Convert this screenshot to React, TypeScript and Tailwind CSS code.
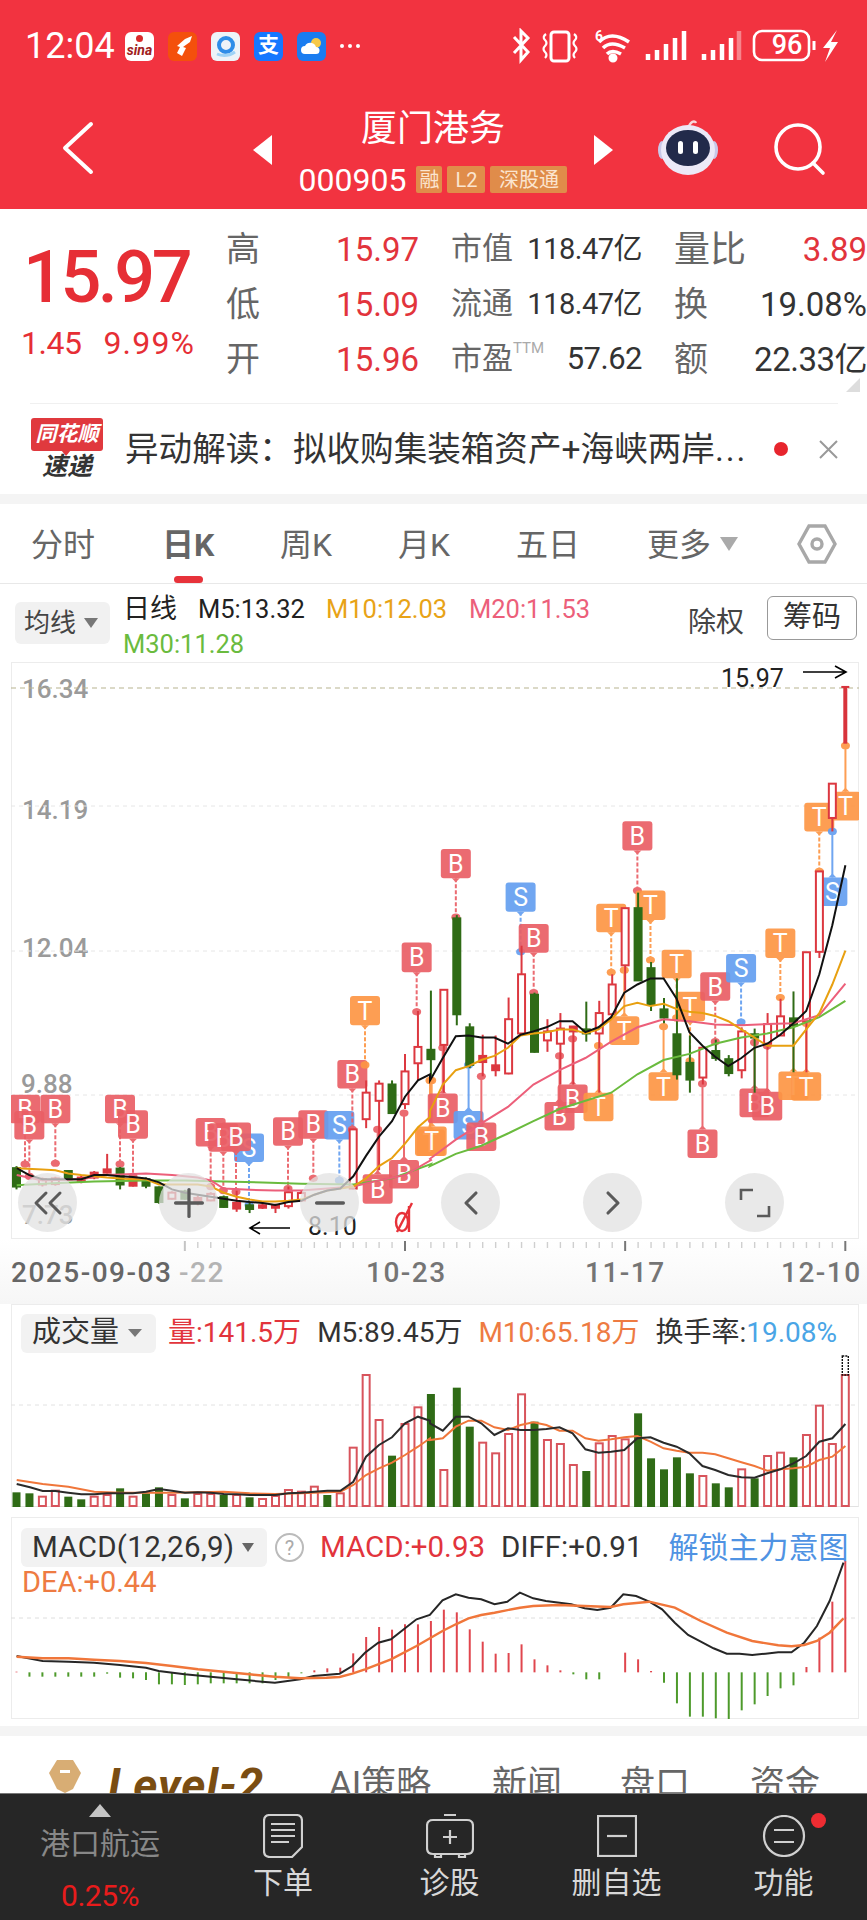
import { ChevronLeft, ChevronRight, ChevronsLeft, Minus, Plus } from "lucide-react";

const RED = "#e7323a";
const GREEN = "#2f6b16";

// x of the nth candle, shared by all three panels
const cx = (i: number) => 16.5 + 12.95 * i;

// readings were taken from crops of the chart, these map them back to page px
const L = (x: number) => x / 3;
const R = (x: number) => 430 + x / 2.98;
const Y = (y: number) => 660 + y / 2.45;

function toPoints(left: number[], right: number[], fy: (y: number) => number, fr = R) {
  const out: string[] = [];
  for (let i = 0; i < left.length; i += 2) out.push(`${L(left[i]).toFixed(1)},${fy(left[i + 1]).toFixed(1)}`);
  for (let i = 0; i < right.length; i += 2) out.push(`${fr(right[i]).toFixed(1)},${fy(right[i + 1]).toFixed(1)}`);
  return out.join(" ");
}

type Candle = [number, number, number, number, number, "r" | "g" | "f"];

const CANDLES: Candle[] = [
  [0, 1240, 1297, 1245, 1290, "g"],
  [2, 1268, 1290, 1272, 1285, "r"],
  [3, 1266, 1288, 1270, 1284, "r"],
  [4, 1250, 1274, 1252, 1272, "g"],
  [5, 1262, 1282, 1268, 1276, "f"],
  [6, 1252, 1272, 1256, 1268, "f"],
  [7, 1210, 1258, 1248, 1256, "f"],
  [8, 1242, 1297, 1246, 1285, "g"],
  [9, 1268, 1290, 1272, 1288, "f"],
  [10, 1268, 1294, 1272, 1288, "g"],
  [11, 1290, 1332, 1292, 1328, "g"],
  [12, 1302, 1322, 1305, 1320, "r"],
  [13, 1298, 1322, 1302, 1320, "g"],
  [14, 1312, 1336, 1318, 1326, "f"],
  [15, 1304, 1326, 1308, 1324, "r"],
  [16, 1312, 1342, 1316, 1340, "g"],
  [17, 1300, 1352, 1330, 1344, "f"],
  [18, 1330, 1355, 1336, 1345, "g"],
  [19, 1330, 1345, 1336, 1342, "f"],
  [20, 1332, 1355, 1336, 1342, "f"],
  [21, 1290, 1344, 1304, 1338, "r"],
  [22, 1300, 1328, 1306, 1324, "r"],
  [26, 1150, 1297, 1150, 1295, "r"],
  [27, 1030, 1147, 1060, 1125, "r"],
  [28, 1030, 1250, 1038, 1080, "r"],
  [29, 1030, 1112, 1040, 1110, "g"],
  [30, 965, 1100, 1008, 1088, "r"],
  [31, 860, 1030, 948, 988, "r"],
  [32, 810, 1020, 955, 978, "g"],
  [33, 808, 1060, 808, 943, "r"],
  [34, 625, 895, 633, 868, "g"],
  [35, 890, 1000, 900, 992, "g"],
  [36, 918, 1020, 970, 985, "f"],
  [37, 920, 1020, 993, 1005, "f"],
  [38, 827, 1015, 880, 1013, "r"],
  [39, 700, 920, 770, 915, "r"],
  [40, 815, 962, 820, 960, "g"],
  [41, 880, 960, 910, 932, "r"],
  [42, 865, 1040, 903, 940, "r"],
  [43, 897, 1040, 898, 910, "f"],
  [44, 837, 935, 905, 915, "g"],
  [45, 835, 1060, 865, 915, "r"],
  [46, 770, 870, 795, 868, "r"],
  [47, 608, 810, 608, 748, "r"],
  [48, 570, 785, 608, 785, "g"],
  [49, 740, 860, 755, 845, "g"],
  [50, 828, 890, 856, 876, "g"],
  [51, 780, 1028, 917, 1015, "g"],
  [52, 920, 1060, 987, 1028, "g"],
  [53, 950, 1040, 950, 1023, "r"],
  [54, 930, 982, 958, 975, "g"],
  [55, 968, 1020, 978, 1012, "g"],
  [56, 900, 1025, 910, 1005, "r"],
  [57, 903, 1060, 917, 925, "g"],
  [58, 865, 955, 892, 940, "r"],
  [59, 830, 920, 873, 920, "r"],
  [60, 812, 1010, 878, 895, "g"],
  [61, 716, 1010, 716, 885, "r"],
  [62, 518, 730, 518, 715, "r"],
  [63, 303, 420, 303, 387, "r"],
];

const FLAG_COLOR: Record<string, string> = { B: "#ea5f66", S: "#649ff0", T: "#fd9645" };

// label, x, top, bottom, y of the dot at the end of the stem
type Flag = [string, number, number, number, number];

const FLAGS_LEFT: Flag[] = [
  ["B", 75, 1065, 1135, 1235],
  ["B", 88, 1105, 1175, 1265],
  ["B", 166, 1065, 1135, 1233],
  ["B", 360, 1065, 1135, 1235],
  ["B", 399, 1103, 1173, 1265],
  ["S", 747, 1160, 1230, 1335],
  ["B", 632, 1122, 1192, 1290],
  ["B", 670, 1135, 1205, 1300],
  ["B", 708, 1133, 1203, 1303],
  ["B", 864, 1120, 1190, 1295],
  ["B", 940, 1103, 1173, 1270],
  ["S", 1018, 1105, 1175, 1275],
  ["B", 1057, 980, 1050, 1150],
  ["T", 1095, 823, 895, 992],
  ["B", 1250, 692, 765, 862],
  ["B", 1133, 1260, 1332, 1150],
  ["B", 1212, 1225, 1295, 1110],
  ["T", 1290, 1150, 1215, 1030],
];

const FLAGS_RIGHT: Flag[] = [
  ["T", 5, 1143, 1215, 1030],
  ["B", 38, 1062, 1135, 950],
  ["S", 115, 1105, 1175, 992],
  ["B", 153, 1133, 1203, 1020],
  ["B", 77, 463, 535, 630],
  ["S", 270, 545, 617, 715],
  ["B", 309, 647, 717, 815],
  ["B", 386, 1083, 1153, 970],
  ["B", 425, 1040, 1110, 928],
  ["T", 502, 1060, 1130, 945],
  ["T", 540, 597, 667, 765],
  ["T", 579, 873, 943, 760],
  ["B", 618, 395, 467, 565],
  ["T", 657, 565, 637, 735],
  ["T", 696, 1010, 1080, 898],
  ["T", 735, 710, 780, 877],
  ["T", 775, 813, 885, 982],
  ["B", 812, 1150, 1220, 1038],
  ["B", 850, 765, 835, 935],
  ["S", 927, 720, 790, 887],
  ["B", 967, 1050, 1120, 937],
  ["B", 1005, 1058, 1128, 945],
  ["T", 1044, 658, 730, 827],
  ["T", 1083, 1008, 1078, 890],
  ["T", 1121, 1010, 1080, 890],
  ["T", 1160, 350, 420, 518],
  ["S", 1199, 533, 603, 420],
  ["T", 1238, 323, 393, 210],
];

const MA5 = toPoints(
  [50, 1245, 88, 1262, 127, 1272, 205, 1272, 244, 1272, 283, 1262, 321, 1262, 360, 1265, 399, 1267, 438, 1270, 477, 1280, 516, 1297, 555, 1305, 593, 1310, 632, 1315, 671, 1320, 710, 1325, 749, 1328, 788, 1330, 826, 1335, 865, 1328, 904, 1325, 943, 1310, 982, 1300, 1021, 1295, 1060, 1265, 1098, 1215, 1137, 1168, 1176, 1130, 1215, 1070, 1254, 1030, 1290, 1015],
  [0, 1030, 38, 975, 77, 922, 115, 920, 153, 925, 192, 925, 232, 940, 270, 918, 308, 910, 347, 900, 386, 885, 425, 885, 463, 912, 502, 900, 540, 875, 579, 815, 618, 795, 657, 780, 696, 780, 735, 830, 773, 912, 812, 945, 850, 972, 889, 995, 928, 975, 967, 950, 1005, 940, 1044, 918, 1083, 890, 1121, 860, 1160, 770, 1199, 650, 1238, 503],
  Y,
);
const MA10 = toPoints(
  [50, 1245, 127, 1248, 166, 1250, 205, 1258, 244, 1262, 283, 1265, 321, 1268, 360, 1270, 399, 1272, 438, 1272, 477, 1285, 593, 1285, 632, 1290, 671, 1305, 710, 1315, 749, 1322, 788, 1327, 826, 1327, 865, 1325, 904, 1322, 943, 1310, 982, 1300, 1021, 1295, 1060, 1290, 1098, 1270, 1137, 1240, 1176, 1220, 1215, 1185, 1254, 1145, 1290, 1120],
  [0, 1105, 38, 1040, 77, 1005, 115, 995, 153, 980, 192, 970, 232, 950, 270, 920, 308, 915, 347, 912, 386, 905, 425, 905, 463, 915, 502, 905, 540, 880, 579, 848, 618, 840, 657, 848, 696, 842, 735, 855, 773, 862, 812, 865, 850, 872, 889, 885, 928, 905, 967, 925, 1005, 945, 1044, 945, 1083, 945, 1121, 905, 1160, 865, 1199, 795, 1238, 712],
  Y,
);
const MA20 = toPoints(
  [50, 1262, 127, 1275, 244, 1272, 321, 1262, 438, 1258, 516, 1262, 593, 1268, 632, 1275, 671, 1295, 749, 1298, 826, 1300, 904, 1300, 982, 1295, 1060, 1290, 1137, 1275, 1215, 1262, 1293, 1225],
  [0, 1222, 77, 1175, 153, 1135, 232, 1095, 308, 1040, 386, 1005, 463, 975, 540, 935, 618, 900, 696, 880, 773, 885, 850, 893, 928, 895, 1005, 892, 1083, 890, 1160, 870, 1238, 793],
  Y,
);
const MA30 = toPoints(
  [50, 1287, 160, 1282, 282, 1278, 438, 1275, 555, 1275, 671, 1278, 788, 1280, 904, 1283, 1060, 1285, 1176, 1270, 1293, 1235],
  [0, 1240, 77, 1210, 153, 1190, 232, 1160, 308, 1130, 386, 1100, 463, 1080, 540, 1060, 618, 1015, 696, 980, 773, 965, 850, 940, 928, 925, 1005, 915, 1083, 900, 1160, 875, 1238, 835],
  Y,
);

const VOLUMES: [number, "r" | "g"][] = [
  [577, "g"], [580, "g"], [590, "r"], [572, "r"], [590, "g"], [598, "g"], [590, "r"], [585, "r"], [565, "g"], [590, "r"],
  [580, "g"], [562, "g"], [585, "r"], [595, "g"], [582, "r"], [582, "r"], [585, "g"], [585, "r"], [592, "g"], [597, "r"],
  [588, "r"], [570, "r"], [575, "r"], [560, "r"], [585, "g"], [580, "r"], [443, "r"], [225, "r"], [360, "r"], [467, "g"],
  [372, "r"], [322, "r"], [282, "g"], [510, "r"], [263, "g"], [380, "g"], [428, "r"], [460, "r"], [402, "r"], [283, "r"],
  [365, "g"], [420, "r"], [432, "r"], [495, "r"], [513, "g"], [430, "r"], [408, "r"], [418, "r"], [340, "g"], [475, "g"],
  [508, "g"], [472, "g"], [520, "g"], [528, "r"], [550, "g"], [562, "g"], [508, "r"], [535, "g"], [468, "r"], [458, "r"],
  [472, "g"], [405, "r"], [317, "r"], [432, "r"], [225, "r"],
];

const VY = (y: number) => 1300 + y / 3;
const VOL_BLACK = toPoints(
  [50, 552, 90, 562, 128, 573, 166, 573, 205, 578, 244, 583, 283, 583, 321, 580, 399, 580, 438, 575, 477, 567, 516, 572, 555, 578, 593, 577, 632, 578, 671, 582, 710, 583, 749, 585, 826, 585, 865, 580, 904, 578, 943, 575, 982, 572, 1021, 572, 1060, 545, 1098, 470, 1137, 435, 1176, 412, 1215, 370, 1254, 350, 1290, 362],
  [0, 370, 38, 392, 77, 350, 115, 350, 153, 370, 192, 405, 232, 385, 270, 390, 308, 390, 347, 387, 386, 382, 425, 400, 463, 448, 502, 458, 540, 455, 579, 450, 618, 415, 657, 412, 696, 428, 735, 440, 773, 460, 812, 498, 850, 510, 889, 525, 928, 532, 967, 533, 1005, 520, 1044, 508, 1083, 490, 1121, 468, 1160, 425, 1199, 415, 1238, 372],
  VY,
);
const VOL_ORANGE = toPoints(
  [50, 540, 128, 552, 205, 560, 283, 575, 360, 578, 516, 578, 593, 577, 671, 575, 749, 580, 826, 582, 904, 580, 982, 577, 1021, 575, 1060, 555, 1098, 525, 1137, 505, 1176, 488, 1215, 465, 1254, 440, 1290, 415],
  [0, 420, 38, 415, 77, 380, 115, 362, 153, 362, 192, 382, 232, 390, 270, 375, 308, 367, 347, 375, 386, 392, 425, 392, 463, 415, 502, 422, 540, 418, 579, 412, 618, 408, 657, 425, 696, 445, 735, 452, 773, 458, 812, 458, 850, 463, 889, 475, 928, 487, 967, 498, 1005, 512, 1044, 508, 1083, 505, 1121, 500, 1160, 480, 1199, 470, 1238, 438],
  VY,
);

// macd crop had its own scale
const MX = (x: number) => x / 1.808;
const MY = (y: number) => 1510 + y / 3;
const MACD_ZERO = 484;
const MACD_BARS = [
  482, 497, 497, 497, 497, 497, 497, 488, 500, 502, 507, 520, 520, 522, 520, 517, 517, 517, 517, 517, 507, 500, 487, 478, 472,
  470, 427, 378, 348, 356, 340, 340, 330, 296, 304, 355, 392, 428, 426, 400, 445, 463, 478, 490, 505, 505, 484, 425, 445, 480,
  515, 577, 617, 617, 622, 625, 598, 580, 555, 532, 523, 468, 380, 272, 150,
];
const macdLine = (p: number[]) => {
  const out: string[] = [];
  for (let i = 0; i < p.length; i += 2) out.push(`${MX(p[i]).toFixed(1)},${MY(p[i + 1]).toFixed(1)}`);
  return out.join(" ");
};
const DIFF_LINE = macdLine([30, 435, 77, 450, 124, 452, 170, 455, 217, 462, 264, 470, 287, 480, 334, 490, 381, 497, 428, 505, 474, 512, 497, 515, 543, 505, 567, 495, 614, 488, 637, 465, 660, 425, 684, 395, 707, 385, 730, 355, 753, 325, 777, 312, 800, 268, 824, 250, 847, 260, 870, 265, 894, 280, 917, 272, 940, 245, 964, 262, 987, 270, 1033, 280, 1057, 292, 1080, 297, 1104, 290, 1127, 250, 1150, 255, 1174, 272, 1197, 295, 1220, 335, 1244, 372, 1267, 392, 1290, 412, 1314, 428, 1337, 428, 1360, 432, 1384, 428, 1407, 424, 1431, 424, 1454, 395, 1477, 345, 1500, 270, 1525, 155]);
const DEA_LINE = macdLine([30, 437, 77, 442, 124, 442, 170, 446, 217, 450, 264, 456, 311, 465, 358, 475, 404, 482, 451, 490, 497, 497, 543, 502, 590, 500, 614, 498, 637, 488, 660, 475, 707, 445, 753, 405, 800, 360, 824, 340, 847, 322, 870, 312, 894, 305, 940, 290, 964, 285, 1010, 282, 1057, 285, 1104, 288, 1127, 280, 1174, 272, 1220, 290, 1267, 330, 1314, 365, 1360, 390, 1407, 403, 1431, 406, 1454, 402, 1477, 390, 1500, 365, 1525, 322]);

function FlagMark({ flag, fx }: { flag: Flag; fx: (x: number) => number }) {
  const [label, zx, zTop, zBottom, zDot] = flag;
  const x = fx(zx);
  const top = Y(zTop);
  const bottom = Y(zBottom);
  const dot = Y(zDot);
  const above = dot > bottom;
  const color = FLAG_COLOR[label];
  return (
    <g opacity={0.92}>
      <line
        x1={x}
        x2={x}
        y1={above ? bottom : top}
        y2={dot}
        stroke={color}
        strokeWidth={2}
        strokeDasharray={above ? "4 2" : undefined}
      />
      <ellipse cx={x} cy={dot} rx={4.5} ry={3.6} fill={color} />
      <rect x={x - 15} y={top} width={30} height={bottom - top} rx={3} fill={color} />
      <polygon
        points={above ? `${x - 4},${bottom} ${x + 4},${bottom} ${x},${bottom + 4}` : `${x - 4},${top} ${x + 4},${top} ${x},${top - 4}`}
        fill={color}
      />
      <text x={x} y={(top + bottom) / 2 + 9} textAnchor="middle" fontSize={25} fill="#fff" fontFamily="Roboto, sans-serif">
        {label}
      </text>
    </g>
  );
}

function CandleMark({ c }: { c: Candle }) {
  const [i, hi, lo, top, bot, kind] = c;
  const x = cx(i);
  const color = kind === "g" ? GREEN : "#dc3840";
  return (
    <g>
      <line x1={x} x2={x} y1={Y(hi)} y2={Y(lo)} stroke={color} strokeWidth={2} />
      <rect
        x={x - 3.5}
        y={Y(top)}
        width={7}
        height={Y(bot) - Y(top)}
        fill={kind === "r" ? "#fff" : color}
        stroke={color}
        strokeWidth={2}
      />
    </g>
  );
}

function OverlayButton({ x, children }: { x: number; children: React.ReactNode }) {
  // sits over the candles, x comes from the data so it goes through style
  return (
    <div
      className="absolute top-[510px] flex h-[59px] w-[59px] items-center justify-center rounded-full bg-[#e2e2e2]/75 text-[#5a5a5a]"
      style={{ left: x - 30 }}
    >
      {children}
    </div>
  );
}

function AxisLabel({ className, children }: { className: string; children: string }) {
  return <span className={`absolute text-[26px] leading-[30px] font-medium text-[#9a9a9a] ${className}`}>{children}</span>;
}

function KLineChart() {
  return (
    <div className="relative ml-[11px] h-[577px] w-[848px] border border-[#ececec]">
      <AxisLabel className="left-[10px] top-[11px]">16.34</AxisLabel>
      <AxisLabel className="left-[10px] top-[132px]">14.19</AxisLabel>
      <AxisLabel className="left-[10px] top-[270px]">12.04</AxisLabel>
      <AxisLabel className="left-[9px] top-[406px]">9.88</AxisLabel>
      <AxisLabel className="left-[10px] top-[537px]">7.73</AxisLabel>
      <svg className="absolute -left-px -top-px" width={848} height={577} viewBox="11 662 848 577">
        <line x1={11} x2={859} y1={688} y2={688} stroke="#b8b48f" strokeWidth={1.2} strokeDasharray="5 4" />
        {[806, 951, 1095].map((y) => (
          <line key={y} x1={11} x2={859} y1={y} y2={y} stroke="#e6e6e6" strokeWidth={1} strokeDasharray="4 4" />
        ))}
        {FLAGS_LEFT.map((f, i) => (
          <FlagMark key={`l${i}`} flag={f} fx={L} />
        ))}
        {FLAGS_RIGHT.map((f, i) => (
          <FlagMark key={`r${i}`} flag={f} fx={R} />
        ))}
        {CANDLES.map((c) => (
          <CandleMark key={c[0]} c={c} />
        ))}
        <line x1={cx(64)} x2={cx(64)} y1={Y(65)} y2={Y(205)} stroke="#d8333c" strokeWidth={4} />
        <line x1={cx(64) - 4} x2={cx(64) + 4} y1={Y(66)} y2={Y(66)} stroke="#d8333c" strokeWidth={2} />
        <polyline points={MA30} fill="none" stroke="#6abb3e" strokeWidth={2} />
        <polyline points={MA20} fill="none" stroke="#ec5f7a" strokeWidth={2} />
        <polyline points={MA10} fill="none" stroke="#e8a010" strokeWidth={2} />
        <polyline points={MA5} fill="none" stroke="#111" strokeWidth={2} />
        {/* arrows next to the high and low prices */}
        <path d="M803 672H846M835 666L846 672L835 678" fill="none" stroke="#000" strokeWidth={1.6} />
        <path d="M290 1228H250M260 1222L250 1228L260 1234" fill="none" stroke="#000" strokeWidth={1.6} />
        {/* slashed marker */}
        <g fill="none" stroke={RED} strokeWidth={2.4}>
          <ellipse cx={402} cy={1222} rx={6} ry={9} />
          <path d="M409 1206V1232M397 1232L412 1203" />
        </g>
      </svg>
      <span className="absolute left-[709px] top-[2px] text-[25px] leading-[28px] text-[#222]">15.97</span>
      <span className="absolute left-[296px] top-[550px] text-[25px] leading-[28px] text-[#222]">8.10</span>
      <OverlayButton x={36}>
        <ChevronsLeft size={48} strokeWidth={1.5} />
      </OverlayButton>
      <OverlayButton x={177}>
        <Plus size={46} strokeWidth={1.7} />
      </OverlayButton>
      <OverlayButton x={318}>
        <Minus size={46} strokeWidth={1.7} />
      </OverlayButton>
      <OverlayButton x={459}>
        <ChevronLeft size={40} strokeWidth={1.9} />
      </OverlayButton>
      <OverlayButton x={601}>
        <ChevronRight size={40} strokeWidth={1.9} />
      </OverlayButton>
      <OverlayButton x={743}>
        <svg width="34" height="32" viewBox="0 0 34 32" fill="none" stroke="currentColor" strokeWidth="2.6">
          <path d="M3 13V3H15M31 19V29H19" />
        </svg>
      </OverlayButton>
    </div>
  );
}

function TimeAxis() {
  return (
    <div className="h-[65px] bg-gradient-to-b from-white to-[#f6f6f6]">
      <svg className="block" width={867} height={12}>
        {Array.from({ length: 52 }, (_, n) => n + 13).map((i) => {
          const major = i === 13 || i === 30 || i === 47 || i === 64;
          return (
            <line
              key={i}
              x1={cx(i)}
              x2={cx(i)}
              y1={major ? 2 : 3}
              y2={major ? 12 : 9}
              stroke={major ? (i === 13 ? "#c4c4c4" : "#777") : "#cfcfcf"}
              strokeWidth={major ? 2 : 1.4}
            />
          );
        })}
      </svg>
      <div className="mt-[7px] flex text-[28px] leading-[30px] font-medium tracking-[1.5px] whitespace-nowrap text-[#757575]">
        <span className="ml-[11px] w-[168px] text-[#666]">2025-09-03</span>
        <span className="w-[187px] text-[#b4b4b4]">-22</span>
        <span className="w-[219px]">10-23</span>
        <span className="w-[196px]">11-17</span>
        <span>12-10</span>
      </div>
    </div>
  );
}

function VolumePanel() {
  return (
    <div className="relative ml-[11px] h-[203px] w-[848px] border border-[#ececec] border-b-[#e2e2e2]">
      <svg className="absolute -left-px -top-px" width={848} height={203} viewBox="11 1304 848 203">
        <line x1={11} x2={859} y1={1405} y2={1405} stroke="#e2e2e2" strokeDasharray="4 4" />
        {VOLUMES.map(([top, kind], i) =>
          kind === "g" ? (
            <rect key={i} x={cx(i) - 4} y={VY(top)} width={8} height={1507 - VY(top)} fill={GREEN} />
          ) : (
            <rect key={i} x={cx(i) - 3.5} y={VY(top)} width={7} height={1506 - VY(top)} fill="#fff" stroke="#d8545c" strokeWidth={2} />
          ),
        )}
        <rect x={cx(64) - 3} y={VY(168)} width={6} height={VY(225) - VY(168)} fill="none" stroke="#111" strokeWidth={1.4} strokeDasharray="2 1" />
        <polyline points={VOL_ORANGE} fill="none" stroke="#f0763a" strokeWidth={2} />
        <polyline points={VOL_BLACK} fill="none" stroke="#2a2a2a" strokeWidth={2} />
      </svg>
      <div className="relative flex h-[56px] items-center whitespace-nowrap text-[28px]">
        <div className="ml-[9px] flex h-[39px] w-[135px] items-center rounded-md bg-[#f2f2f2] pl-[11px] text-[29px] text-[#333]">
          成交量
          <span className="ml-[9px] h-0 w-0 border-x-[7px] border-t-[8px] border-x-transparent border-t-[#777]" />
        </div>
        <span className="ml-[12px] text-[#e2343c]">量:141.5万</span>
        <span className="ml-[16px] text-[#333]">M5:89.45万</span>
        <span className="ml-[16px] text-[#ee7b42]">M10:65.18万</span>
        <span className="ml-[16px] text-[#333]">换手率:</span>
        <span className="text-[#4aa5e6]">19.08%</span>
      </div>
    </div>
  );
}

function MacdPanel() {
  return (
    <div className="relative ml-[11px] mt-[10px] h-[202px] w-[848px] border border-[#ececec]">
      <svg className="absolute -left-px -top-px" width={848} height={202} viewBox="11 1516 848 202">
        <line x1={11} x2={859} y1={1617} y2={1617} stroke="#dedede" strokeDasharray="4 4" />
        {MACD_BARS.map((tip, i) => (
          <line
            key={i}
            x1={cx(i)}
            x2={cx(i)}
            y1={MY(MACD_ZERO)}
            y2={MY(tip)}
            stroke={tip < MACD_ZERO ? "#e0464e" : "#4d9a2b"}
            strokeWidth={2}
          />
        ))}
        <polyline points={DIFF_LINE} fill="none" stroke="#262626" strokeWidth={2} />
        <polyline points={DEA_LINE} fill="none" stroke="#f0763a" strokeWidth={2.4} />
      </svg>
      <div className="relative flex h-[59px] items-center whitespace-nowrap text-[29.5px]">
        <div className="ml-[9px] flex h-[39px] w-[246px] items-center rounded-md bg-[#f2f2f2] pl-[11px] text-[29.5px] tracking-[0.3px] text-[#333]">
          MACD(12,26,9)
          <span className="ml-[8px] h-0 w-0 border-x-[6px] border-t-[9px] border-x-transparent border-t-[#666]" />
        </div>
        <span className="ml-[8px] flex h-[29px] w-[29px] items-center justify-center rounded-full border-2 border-[#bbb] text-[20px] text-[#aaa]">?</span>
        <span className="ml-[16px] text-[#e2343c]">MACD:+0.93</span>
        <span className="ml-[16px] text-[#333]">DIFF:+0.91</span>
        <span className="ml-[26px] text-[30px] text-[#4f93e3]">解锁主力意图</span>
      </div>
      <div className="relative -mt-[10px] ml-[10px] text-[29px] leading-[30px] text-[#ee7b42]">DEA:+0.44</div>
    </div>
  );
}

function StatusBar() {
  const tile = "flex h-[29px] w-[29px] items-center justify-center rounded-[6px]";
  return (
    <div className="flex h-[92px] items-center pl-[25px] text-white">
      <span className="w-[100px] text-[36px] leading-none">12:04</span>
      <div className={`${tile} relative bg-white pt-[7px] text-[14px] leading-none font-bold text-[#a02020] italic`}>
        sina
        <span className="absolute left-[11px] top-[3px] h-[7px] w-[7px] rounded-full bg-[#d82a2a]" />
      </div>
      <div className={`${tile} ml-[14px] bg-[#f4500c]`}>
        <svg width="20" height="22" viewBox="0 0 20 22" fill="#fff">
          <path d="M19 1L12 4L4 11L7 12L4 18L9 21L13 13L10 12L17 7Z" />
        </svg>
      </div>
      <div className={`${tile} ml-[14px] bg-[#eef3f8]`}>
        <svg width="24" height="24" viewBox="0 0 24 24" fill="none">
          <circle cx="12" cy="11" r="7" stroke="#2f8de8" strokeWidth="4" />
          <path d="M3 20Q12 24 21 18" stroke="#9fd3f6" strokeWidth="3" />
        </svg>
      </div>
      <div className={`${tile} ml-[14px] bg-[#1677ff] text-[21px] font-bold`}>支</div>
      <div className={`${tile} ml-[14px] bg-[#1a7cf0]`}>
        <svg width="24" height="24" viewBox="0 0 24 24">
          <circle cx="16" cy="9" r="5" fill="#f7c948" />
          <path d="M5 20a4 4 0 0 1 0-8 6 6 0 0 1 11 1 3.5 3.5 0 0 1 0 7Z" fill="#fff" />
        </svg>
      </div>
      <div className="ml-[14px] flex gap-[4px]">
        <span className="h-[4px] w-[4px] rounded-full bg-white" />
        <span className="h-[4px] w-[4px] rounded-full bg-white" />
        <span className="h-[4px] w-[4px] rounded-full bg-white" />
      </div>
      <svg className="ml-[152px]" width="326" height="36" viewBox="517 28 326 36" fill="none" stroke="#fff" strokeWidth="3">
        {/* bluetooth */}
        <path d="M519 37L533 52L526 60V31L533 38L519 53" />
        {/* vibrate */}
        <rect x="556" y="32" width="18" height="29" rx="3" />
        <path d="M551 34Q547 37 550 40Q553 43 550 46Q547 49 550 52Q553 55 550 58M579 34Q583 37 580 40Q577 43 580 46Q583 49 580 52Q577 55 580 58" strokeWidth="2.2" />
        {/* wifi */}
        <path d="M604 42Q616 30 634 42M608 48Q616 40 630 48M612 54Q617 49 626 54" strokeWidth="3.6" />
        <circle cx="618" cy="58" r="3" fill="#fff" />
        {/* signal */}
        <path d="M653 60V54M662 60V50M671 60V44M680 60V38M689 60V31" strokeWidth="4.5" />
        <path d="M709 60V54M718 60V50M727 60V44M736 60V38" strokeWidth="4.5" />
        <path d="M744 60V31" strokeWidth="4.5" stroke="#ffffff66" />
        {/* battery */}
        <rect x="759" y="31" width="55" height="29" rx="8" strokeWidth="2.6" />
        <path d="M819 41V50" />
        {/* charging */}
        <path d="M842 30L828 48H835L830 62L843 42H836Z" fill="#fff" stroke="none" />
      </svg>
      <span className="absolute left-[595px] top-[28px] text-[14px] leading-[16px] font-bold">6</span>
      <span className="absolute left-[771px] top-[29px] w-[32px] text-center text-[27px] leading-[33px] font-medium">96</span>
    </div>
  );
}

function Header() {
  return (
    <header className="h-[209px] bg-[#f23340] text-white">
      <StatusBar />
      <div className="flex h-[117px]">
        <svg className="ml-[62px] mt-[29px]" width="32" height="54" viewBox="0 0 32 54" fill="none" stroke="#fff" strokeWidth="4" strokeLinecap="round" strokeLinejoin="round">
          <path d="M29 3L3 27L29 51" />
        </svg>
        <span className="ml-[159px] mt-[43px] h-0 w-0 border-y-[15px] border-r-[19px] border-y-transparent border-r-white" />
        <div className="flex w-[322px] flex-col items-center">
          <div className="mt-[17px] text-[36px] leading-[40px]">厦门港务</div>
          <div className="mt-[17px] flex h-[27px] items-center">
            <span className="text-[32px] leading-none text-white">000905</span>
            <span className="ml-[10px] flex h-[27px] w-[26px] items-center justify-center rounded-[2px] bg-[#e08c4a] text-[20px] text-[#fbe5d0]">融</span>
            <span className="ml-[5px] flex h-[27px] w-[38px] items-center justify-center rounded-[2px] bg-[#e08c4a] text-[20px] text-[#fbe5d0]">L2</span>
            <span className="ml-[5px] flex h-[27px] w-[77px] items-center justify-center rounded-[2px] bg-[#e08c4a] text-[20px] text-[#fbe5d0]">深股通</span>
          </div>
        </div>
        <span className="mt-[43px] h-0 w-0 border-y-[15px] border-l-[19px] border-y-transparent border-l-white" />
        <svg className="ml-[44px] mt-[27px]" width="62" height="56" viewBox="0 0 62 56">
          <path d="M31 10C33 2 38 1 39 4" fill="none" stroke="#f8d7da" strokeWidth="2.4" />
          <ellipse cx="5" cy="31" rx="4" ry="9" fill="#c9c8e8" />
          <ellipse cx="57" cy="31" rx="4" ry="9" fill="#c9c8e8" />
          <ellipse cx="31" cy="31" rx="27" ry="25" fill="#ece9f7" />
          <ellipse cx="31" cy="29" rx="22" ry="18" fill="#222a4a" />
          <rect x="21" y="22" width="5" height="13" rx="2.5" fill="#fff" />
          <rect x="36" y="22" width="5" height="13" rx="2.5" fill="#fff" />
        </svg>
        <svg className="ml-[54px] mt-[31px]" width="54" height="54" viewBox="0 0 54 54" fill="none" stroke="#fff" strokeWidth="3.6" strokeLinecap="round">
          <circle cx="25" cy="24" r="22" />
          <path d="M40 40L50 50" />
        </svg>
      </div>
    </header>
  );
}

function QuoteCell({ label, value, labelClass, valueClass }: { label: React.ReactNode; value: string; labelClass: string; valueClass: string }) {
  return (
    <div className="flex h-[55px] items-center justify-between whitespace-nowrap">
      <span className={labelClass}>{label}</span>
      <span className={valueClass}>{value}</span>
    </div>
  );
}

function Quote() {
  const first = "text-[34px] text-[#666]";
  const second = "text-[31px] text-[#666]";
  const third = "text-[36px] text-[#666]";
  const red = "text-[33px] text-[#e2343c]";
  const dark = "text-[29px] tracking-[-0.5px] text-[#333]";
  return (
    <section className="relative h-[195px]">
      <div className="flex">
        <div className="w-[226px] pl-[21px]">
          <div className="pl-[2px] pt-[36px] text-[72px] leading-[66px] font-medium tracking-[-3.5px] text-[#e62e35]">15.97</div>
          <div className="mt-[14px] flex gap-[22px] text-[32px] leading-[36px] text-[#e62e35]">
            <span className="tracking-[-0.5px]">1.45</span>
            <span className="tracking-[1.2px]">9.99%</span>
          </div>
        </div>
        <div className="grid grid-cols-[193px_191px_193px] gap-x-[32px] pt-[13px]">
          <QuoteCell label="高" value="15.97" labelClass={first} valueClass={red} />
          <QuoteCell label="市值" value="118.47亿" labelClass={second} valueClass={dark} />
          <QuoteCell label="量比" value="3.89" labelClass={third} valueClass={red} />
          <QuoteCell label="低" value="15.09" labelClass={first} valueClass={red} />
          <QuoteCell label="流通" value="118.47亿" labelClass={second} valueClass={dark} />
          <QuoteCell label="换" value="19.08%" labelClass={first} valueClass="text-[33px] text-[#333]" />
          <QuoteCell label="开" value="15.96" labelClass={first} valueClass={red} />
          <QuoteCell
            label={
              <span className="flex items-start">
                市盈<span className="mt-[5px] text-[15px] leading-none text-[#aaa]">TTM</span>
              </span>
            }
            value="57.62"
            labelClass={second}
            valueClass="text-[31px] tracking-[-0.5px] text-[#333]"
          />
          <QuoteCell label="额" value="22.33亿" labelClass={first} valueClass="text-[33px] tracking-[-0.5px] text-[#333]" />
        </div>
      </div>
      <span className="absolute right-[7px] top-[169px] h-0 w-0 border-b-[14px] border-l-[14px] border-b-[#ddd] border-l-transparent" />
      <div className="absolute bottom-0 left-[30px] right-[29px] h-px bg-[#f0f0f0]" />
    </section>
  );
}

function NewsStrip() {
  return (
    <div className="flex h-[90px] items-center">
      <div className="ml-[31px] flex w-[72px] flex-col items-center">
        <div className="relative flex h-[33px] w-[72px] items-center justify-center rounded-[3px] bg-[#e0393e] text-[21px] font-bold text-white italic">
          同花顺
          <span className="absolute -bottom-[5px] left-[30px] h-0 w-0 border-x-[5px] border-t-[6px] border-x-transparent border-t-[#e0393e]" />
        </div>
        <div className="mt-[3px] text-[25px] leading-[26px] font-bold text-[#333] italic">速递</div>
      </div>
      <span className="ml-[22px] w-[636px] overflow-hidden pt-[2px] text-[33.6px] leading-[40px] whitespace-nowrap text-[#333]">
        异动解读：拟收购集装箱资产+海峡两岸<span className="tracking-[2px]">...</span>
      </span>
      <span className="ml-[13px] h-[14px] w-[14px] rounded-full bg-[#e7252d]" />
      <svg className="ml-[30px]" width="21" height="21" viewBox="0 0 21 21" stroke="#999" strokeWidth="2">
        <path d="M2 2L19 19M19 2L2 19" />
      </svg>
    </div>
  );
}

function PeriodTabs() {
  const base = "absolute top-[19px] text-[32px] leading-[44px] text-[#666]";
  return (
    <div className="relative h-[80px] border-b border-[#e8e8e8]">
      <span className={`${base} left-[31px]`}>分时</span>
      <span className={`${base} left-[162px] font-bold text-[#333]`}>日K</span>
      <span className={`${base} left-[280px]`}>周K</span>
      <span className={`${base} left-[398px]`}>月K</span>
      <span className={`${base} left-[516px]`}>五日</span>
      <span className={`${base} left-[647px]`}>更多</span>
      <span className="absolute left-[720px] top-[33px] h-0 w-0 border-x-[9px] border-t-[14px] border-x-transparent border-t-[#aaa]" />
      <svg className="absolute left-[797px] top-[20px]" width="40" height="40" viewBox="0 0 40 40" fill="none" stroke="#a8a8a8" strokeWidth="3.4">
        <path d="M12 2H28L38 20L28 38H12L2 20Z" />
        <circle cx="20" cy="20" r="5" />
      </svg>
      <span className="absolute left-[174px] top-[72px] h-[7px] w-[29px] rounded-full bg-[#e7323a]" />
    </div>
  );
}

function MaLegend() {
  return (
    <div className="relative h-[78px]">
      <div className="absolute left-[15px] top-[18px] flex h-[42px] w-[95px] items-center rounded-md bg-[#f1f1f1] pl-[9px] text-[26px] text-[#444]">
        均线
        <span className="ml-[8px] h-0 w-0 border-x-[7px] border-t-[10px] border-x-transparent border-t-[#777]" />
      </div>
      <div className="ml-[123px] flex h-[51px] items-center whitespace-nowrap text-[25.5px]">
        <span className="w-[75px] text-[27px] text-[#222]">日线</span>
        <span className="w-[128px] text-[#222]">M5:13.32</span>
        <span className="w-[143px] text-[#e8a317]">M10:12.03</span>
        <span className="text-[#ec5f7a]">M20:11.53</span>
      </div>
      <div className="ml-[123px] -mt-[6px] text-[25.5px] leading-[30px] text-[#6abb3e]">M30:11.28</div>
      <span className="absolute left-[688px] top-[20px] text-[28px] leading-[38px] text-[#444]">除权</span>
      <div className="absolute left-[767px] top-[12px] flex h-[44px] w-[90px] items-center justify-center rounded-md border border-[#999] text-[29px] text-[#333]">
        筹码
      </div>
    </div>
  );
}

function Level2Tabs() {
  const tab = "absolute top-[27px] text-[35px] leading-[44px] text-[#666]";
  return (
    <div className="relative h-[58px]">
      <svg className="absolute left-[48px] top-[23px]" width="34" height="34" viewBox="0 0 34 34">
        <path d="M9 1H25L33 14L25 30L17 34L9 30L1 14Z" fill="#d8ad74" />
        <rect x="12" y="11" width="10" height="3" fill="#fff" />
      </svg>
      <span className="absolute left-[108px] top-[24px] text-[46px] leading-[50px] font-bold tracking-[1px] text-[#7a4d12] italic">Level-2</span>
      <span className={`${tab} left-[329px]`}>AI策略</span>
      <span className={`${tab} left-[492px]`}>新闻</span>
      <span className={`${tab} left-[620px]`}>盘口</span>
      <span className={`${tab} left-[750px]`}>资金</span>
    </div>
  );
}

function BottomItem({ label, icon, className }: { label: string; icon: React.ReactNode; className: string }) {
  return (
    <div className={`flex flex-col items-center ${className}`}>
      <div className="flex h-[46px] items-center">{icon}</div>
      <div className="mt-[6px] text-[30px] leading-[36px] text-[#d8d8d8]">{label}</div>
    </div>
  );
}

function BottomBar() {
  return (
    <nav className="absolute bottom-0 left-0 flex h-[127px] w-full items-start border-t border-[#777] bg-[#262626]">
      <div className="flex w-[200px] flex-col items-center">
        <span className="mt-[10px] h-0 w-0 border-x-[11px] border-b-[13px] border-x-transparent border-b-[#c4c4c4]" />
        <div className="mt-[8px] text-[30px] leading-[38px] text-[#888]">港口航运</div>
        <div className="mt-[16px] text-[30px] leading-[34px] tracking-[-0.5px] text-[#e81c1c]">0.25%</div>
      </div>
      <BottomItem
        className="mt-[19px] w-[166px]"
        label="下单"
        icon={
          <svg width="40" height="44" viewBox="0 0 40 44" fill="none" stroke="#d0d0d0" strokeWidth="2.2">
            <path d="M7 1H33Q39 1 39 7V33L29 43H7Q1 43 1 37V7Q1 1 7 1Z" />
            <path d="M8 10H32M8 16H32M8 22H32M8 28H26" />
          </svg>
        }
      />
      <BottomItem
        className="mt-[19px] w-[167px]"
        label="诊股"
        icon={
          <svg width="48" height="44" viewBox="0 0 48 44" fill="none" stroke="#d0d0d0" strokeWidth="2.2">
            <path d="M18 1H30M7 6H41Q47 6 47 12V34Q47 40 41 40H7Q1 40 1 34V12Q1 6 7 6Z" />
            <path d="M24 16V30M17 23H31" />
            <path d="M9 40V43H15V40M33 40V43H39V40" />
          </svg>
        }
      />
      <BottomItem
        className="mt-[19px] w-[167px]"
        label="删自选"
        icon={
          <svg width="40" height="42" viewBox="0 0 40 42" fill="none" stroke="#d0d0d0" strokeWidth="2.2">
            <rect x="1" y="1" width="38" height="40" />
            <path d="M10 21H30" />
          </svg>
        }
      />
      <BottomItem
        className="mt-[19px] w-[167px]"
        label="功能"
        icon={
          <svg width="44" height="42" viewBox="0 0 44 42" fill="none" stroke="#d0d0d0" strokeWidth="2.2">
            <ellipse cx="22" cy="21" rx="20" ry="20" />
            <path d="M12 15H32M12 27H32" />
          </svg>
        }
      />
      <span className="absolute left-[811px] top-[19px] h-[15px] w-[15px] rounded-full bg-[#ee2c32]" />
    </nav>
  );
}

export default function App() {
  return (
    <div className="relative h-[1920px] w-[867px] overflow-hidden bg-white font-['Roboto','Noto_Sans_CJK_SC',sans-serif]">
      <Header />
      <Quote />
      <NewsStrip />
      <div className="h-[10px] bg-[#f4f4f4]" />
      <PeriodTabs />
      <MaLegend />
      <KLineChart />
      <TimeAxis />
      <VolumePanel />
      <MacdPanel />
      <div className="mt-[7px] h-[10px] bg-[#f4f4f4]" />
      <Level2Tabs />
      <BottomBar />
    </div>
  );
}
